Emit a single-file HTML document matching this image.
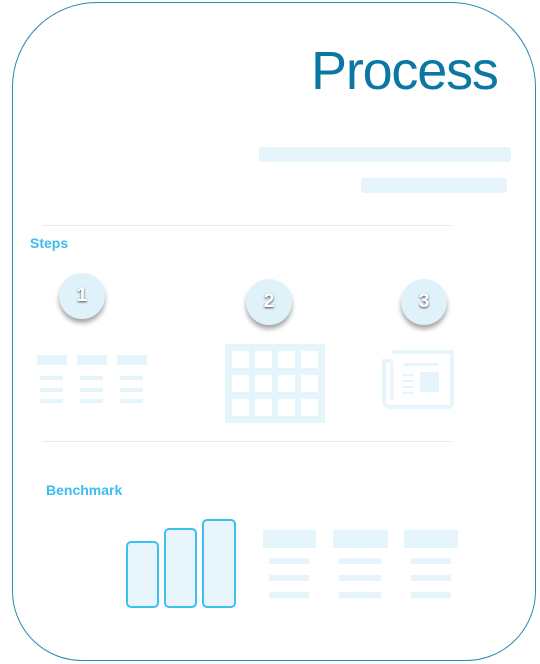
<!DOCTYPE html>
<html><head><meta charset="utf-8"><style>
body{margin:0;width:540px;height:664px;background:#fff;position:relative;overflow:hidden;font-family:"Liberation Sans",sans-serif}
.a{position:absolute}
.card{left:12px;top:2px;width:524px;height:659px;border:1.5px solid #2a8ab5;border-radius:85px 85px 70px 70px;box-sizing:border-box}
.f{background:#e6f5fb}
.c{width:46px;height:46px;border-radius:50%;background:#dff1f9;box-shadow:0 4px 5px rgba(0,0,0,.35);color:#fff;font-weight:bold;font-size:19px;text-align:center;line-height:46px;text-shadow:0 1px 2px #444}
.bar{border:2.5px solid #3cc0ee;border-radius:5px;background:#e8f6fc;box-sizing:border-box}
</style></head><body>
<div class="a card"></div>
<div class="a" style="left:311px;top:40px;font-size:54px;color:#0a78a2;letter-spacing:-1.2px">Process</div>
<div class="a f" style="left:259px;top:147px;width:252px;height:15px;border-radius:3px"></div>
<div class="a f" style="left:361px;top:178px;width:146px;height:15px;border-radius:3px"></div>
<div class="a" style="left:42px;top:225px;width:410px;height:1px;background:#dff0f4"></div>
<div class="a" style="left:30px;top:235px;font-size:14px;font-weight:bold;color:#3cbdee">Steps</div>
<div class="a c" style="left:59px;top:273px">1</div>
<div class="a c" style="left:246px;top:279px">2</div>
<div class="a c" style="left:401px;top:279px">3</div>
<div class="a f" style="left:37px;top:355px;width:30px;height:10px"></div>
<div class="a f" style="left:77px;top:355px;width:30px;height:10px"></div>
<div class="a f" style="left:117px;top:355px;width:30px;height:10px"></div>
<div class="a f" style="left:40px;top:376px;width:23px;height:4px"></div>
<div class="a f" style="left:80px;top:376px;width:23px;height:4px"></div>
<div class="a f" style="left:120px;top:376px;width:23px;height:4px"></div>
<div class="a f" style="left:40px;top:388px;width:23px;height:4px"></div>
<div class="a f" style="left:80px;top:388px;width:23px;height:4px"></div>
<div class="a f" style="left:120px;top:388px;width:23px;height:4px"></div>
<div class="a f" style="left:40px;top:399px;width:23px;height:4px"></div>
<div class="a f" style="left:80px;top:399px;width:23px;height:4px"></div>
<div class="a f" style="left:120px;top:399px;width:23px;height:4px"></div>
<svg class="a" style="left:225px;top:344px" width="100" height="79">
<rect width="100" height="79" fill="#e6f5fb"/>
<g fill="#fff">
<rect x="7" y="7" width="17" height="17"/><rect x="30" y="7" width="17" height="17"/><rect x="53" y="7" width="17" height="17"/><rect x="76" y="7" width="17" height="17"/>
<rect x="7" y="31" width="17" height="17"/><rect x="30" y="31" width="17" height="17"/><rect x="53" y="31" width="17" height="17"/><rect x="76" y="31" width="17" height="17"/>
<rect x="7" y="55" width="17" height="17"/><rect x="30" y="55" width="17" height="17"/><rect x="53" y="55" width="17" height="17"/><rect x="76" y="55" width="17" height="17"/>
</g></svg>
<svg class="a" style="left:382px;top:350px" width="72" height="60">
<path d="M10 2H70V53a4 4 0 0 1-4 4H8a6 6 0 0 1-6-6V11H10" fill="none" stroke="#e6f5fb" stroke-width="4"/>
<path d="M10 11V50" stroke="#e6f5fb" stroke-width="3"/>
<rect x="22" y="13" width="34" height="3" fill="#e6f5fb"/>
<rect x="38" y="22" width="19" height="20" fill="#e6f5fb"/>
<g fill="#e6f5fb"><rect x="20" y="24" width="12" height="2"/><rect x="20" y="30" width="12" height="2"/><rect x="20" y="36" width="12" height="2"/><rect x="20" y="42" width="12" height="2"/></g>
</svg>
<div class="a" style="left:42px;top:441px;width:410px;height:1px;background:#e8eef0"></div>
<div class="a" style="left:46px;top:482px;font-size:14px;font-weight:bold;color:#3cbdee">Benchmark</div>
<div class="a bar" style="left:126px;top:541px;width:33px;height:67px"></div>
<div class="a bar" style="left:164px;top:528px;width:33px;height:80px"></div>
<div class="a bar" style="left:202px;top:519px;width:34px;height:89px"></div>
<div class="a f" style="left:263px;top:530px;width:53px;height:18px"></div>
<div class="a f" style="left:333px;top:530px;width:55px;height:18px"></div>
<div class="a f" style="left:404px;top:530px;width:54px;height:18px"></div>
<div class="a f" style="left:269px;top:558px;width:40px;height:6px"></div>
<div class="a f" style="left:339px;top:558px;width:42px;height:6px"></div>
<div class="a f" style="left:411px;top:558px;width:40px;height:6px"></div>
<div class="a f" style="left:269px;top:575px;width:40px;height:6px"></div>
<div class="a f" style="left:339px;top:575px;width:42px;height:6px"></div>
<div class="a f" style="left:411px;top:575px;width:40px;height:6px"></div>
<div class="a f" style="left:269px;top:592px;width:40px;height:6px"></div>
<div class="a f" style="left:339px;top:592px;width:42px;height:6px"></div>
<div class="a f" style="left:411px;top:592px;width:40px;height:6px"></div>
</body></html>
